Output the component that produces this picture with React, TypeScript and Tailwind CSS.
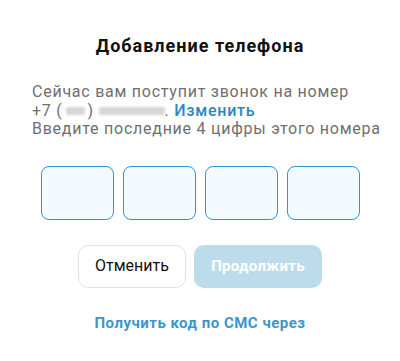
export default function App() {
    const cells = [0, 1, 2, 3];

    return (
        <div
            className="w-[400px] h-[361px] bg-white"
            style={{ fontFamily: "Roboto, 'Liberation Sans', sans-serif" }}
        >
            <div className="pt-[34px] text-center text-[18px] leading-[24px] tracking-[1px] font-bold text-[#111]">
                Добавление телефона
            </div>

            <div className="mt-[25px] pl-[32px] whitespace-nowrap text-[16px] leading-[18.5px] tracking-[0.75px] text-[#6f6f6f]">
                <div>Сейчас вам поступит звонок на номер</div>
                <div className="flex items-center">
                    <span>+7 (</span>
                    <span className="inline-block w-[19px] h-[8px] mx-[3px] bg-[#d6d6d6] rounded-[2px] blur-[1px]" />
                    <span>)&nbsp;</span>
                    <span className="inline-block w-[66px] h-[8px] bg-[#d6d6d6] rounded-[2px] blur-[1px]" />
                    <span>.&nbsp;</span>
                    <a className="font-medium text-[#2a86c4]">Изменить</a>
                </div>
                <div>Введите последние 4 цифры этого номера</div>
            </div>

            <div className="mt-[27px] flex justify-center gap-[9px]">
                {cells.map((i) => (
                    <div
                        key={i}
                        className="w-[73px] h-[54px] rounded-[8px] border border-[#2b98d4] bg-[#f3fbff]"
                    />
                ))}
            </div>

            <div className="mt-[25px] flex justify-center gap-[8px]">
                <button className="w-[108px] h-[43px] rounded-[10px] border border-[#e2e2e2] bg-white text-[16px] text-[#111]">
                    Отменить
                </button>
                <button className="w-[128px] h-[43px] rounded-[10px] bg-[#bcdcec] text-[15px] tracking-[0.3px] font-bold text-white">
                    Продолжить
                </button>
            </div>

            <div className="mt-[25px] text-center text-[15px] leading-[20px] tracking-[0.5px] font-bold text-[#3a95d0]">
                Получить код по СМС через
            </div>
        </div>
    );
}
